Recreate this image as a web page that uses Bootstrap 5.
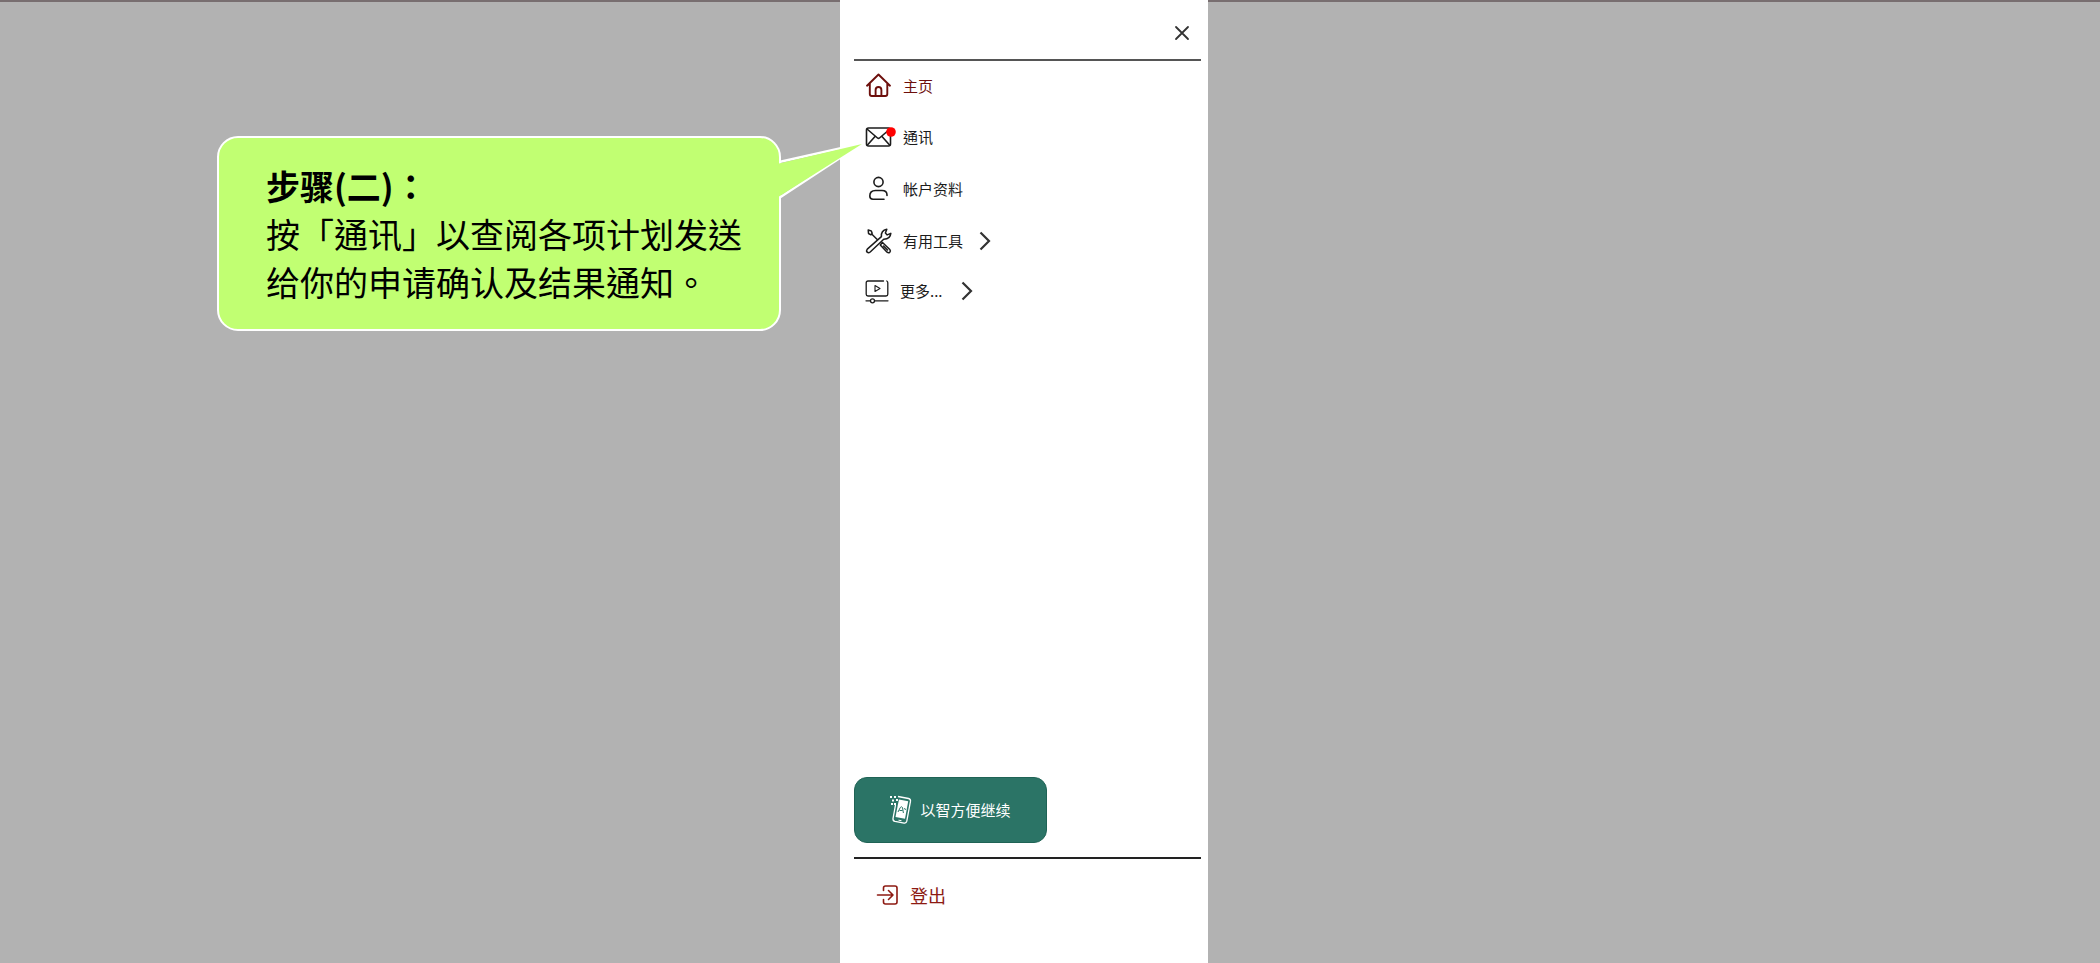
<!DOCTYPE html>
<html lang="zh-Hant">
<head>
<meta charset="utf-8">
<meta name="viewport" content="width=device-width, initial-scale=1">
<title>主页</title>
<link href="https://cdn.jsdelivr.net/npm/bootstrap@5.3.0/dist/css/bootstrap.min.css" rel="stylesheet">
<style>
  body { background: #b2b2b2; color: #1c1c1c; font-family: "Noto Sans CJK TC", sans-serif; font-size: 15px; }
  .shade { border-top: 2px solid #786e70; }
  .guide-col { width: 40%; padding: 134px 59px 0 0; }
  .callout { border: 2px solid #fff; border-radius: 21px; background: #c1ff72; color: #000; font-size: 34px; line-height: 48px; padding: 24px 37px 23px 47px; z-index: 2; }
  .callout-tail { position: absolute; left: 100%; top: 3px; }
  .drawer { width: 368px; padding: 0 7px 0 14px; background: #fff; }
  .drawer-top { height: 59px; padding: 7px 10px 0; }
  .rule { height: 0; border-top: 2px solid #555; }
  .rule-dark { border-color: #222; }
  .menu-link { height: 52px; padding-left: 11px; color: inherit; }
  .menu-link svg:first-child { width: 28px; margin-right: 10px; overflow: visible; }
  .menu-link .chevron { margin-left: 16px; }
  .more-link { height: 48px; }
  .more-link svg:first-child { margin-right: 7px; }
  .more-link .chevron { margin-left: 18px; }
  .home-link { height: 50px; color: #6d0f0c; }
  .smart-btn { width: 193px; height: 66px; margin-bottom: 14px; border: 1px solid #1f6355; border-radius: 13px; background: #2b7466; color: #fff; font-size: 15px; }
  .logout-row { height: 104px; padding: 22px; }
  .logout-link { color: #8d1a12; font-size: 18px; line-height: 28px; gap: 11px; }
</style>
</head>
<body>
<div class="d-flex min-vh-100">
  <section class="shade guide-col d-flex justify-content-end align-items-start flex-shrink-0">
    <div class="callout position-relative">
      <strong class="d-block">步骤(二)：</strong>
      <p class="m-0 text-nowrap">按「通讯」以查阅各项计划发送<br>给你的申请确认及结果通知。</p>
      <svg class="callout-tail" width="86" height="60" viewBox="0 0 86 60" aria-hidden="true">
        <path d="M0 21L83 2.500L0 57" fill="none" stroke="#fff" stroke-width="2.500"/>
        <path d="M0 22.500L83 3L0 55.500Z" fill="#c1ff72"/>
      </svg>
    </div>
  </section>

  <nav class="drawer d-flex flex-column flex-shrink-0" aria-label="主选单">
    <div class="drawer-top d-flex align-items-center justify-content-end">
      <button type="button" class="btn border-0 p-0 d-flex" aria-label="关闭">
        <svg width="18" height="18" viewBox="0 0 18 18" fill="none" stroke="#333" stroke-width="1.8" stroke-linecap="round"><path d="M3 3l12 12M15 3L3 15"/></svg>
      </button>
    </div>
    <div class="rule"></div>

    <a href="#" class="menu-link home-link d-flex align-items-center text-decoration-none">
      <svg height="28" viewBox="0 0 28 28" fill="none" stroke="currentColor" stroke-width="1.9" stroke-linecap="round" stroke-linejoin="round"><path d="M2 13.700L13.500 2.500L25 13.700M4.800 11.500v10.500q0 2 2 2h13.500q2 0 2-2V11.500M10.600 24v-6q0-3 2.900-3t2.900 3v6"/></svg>
      <span>主页</span>
    </a>
    <a href="#" class="menu-link d-flex align-items-center text-decoration-none">
      <svg height="28" viewBox="0 0 28 28" fill="none" stroke="currentColor" stroke-width="1.600" stroke-linejoin="round"><rect x="1.500" y="5" width="24" height="18" rx="2"/><path d="M2 6l10.500 9q1 .8 2 0L25 6M2 22.500l8-9M25 22.500l-8-9"/><circle cx="26" cy="9" r="4.800" fill="red" stroke="none"/></svg>
      <span>通讯</span>
    </a>
    <a href="#" class="menu-link d-flex align-items-center text-decoration-none">
      <svg height="28" viewBox="0 0 28 28" fill="none" stroke="currentColor" stroke-width="1.600" stroke-linecap="round"><circle cx="13.500" cy="7" r="4.600"/><path d="M22 20.500v-.5q0-4.500-5-4.500h-6.500Q4.800 15.500 4.800 21q0 3.200 3.200 3.200h11"/></svg>
      <span>帐户资料</span>
    </a>
    <a href="#" class="menu-link d-flex align-items-center text-decoration-none">
      <svg height="28" viewBox="0 0 28 28" fill="none" stroke="currentColor" stroke-width="1.500" stroke-linejoin="round" stroke-linecap="round"><path d="M16.400 9.600Q15.800 3.500 21.800 2.200L20.400 6l1.800 1.900 3.600-1.500Q25.300 12.300 18.700 12.200L5.200 25q-1.700 1.300-3 .1t.1-3zM3.200 3l3 .9 1 2.400L5.900 7.800 3.500 6.500zM7.200 7.500l5 5M17.500 15.500l7.300 7q1.200 1.500 0 2.700t-2.700 0l-6.800-7.300zM18.500 19l4 4"/></svg>
      <span>有用工具</span>
      <svg class="chevron" width="12" height="20" viewBox="0 0 12 20" fill="none" stroke="#333" stroke-width="2.200"><path d="M1.500 1.500L10 10L1.500 18.500"/></svg>
    </a>
    <a href="#" class="menu-link more-link d-flex align-items-center text-decoration-none">
      <svg height="28" viewBox="0 0 28 28" fill="none" stroke="currentColor" stroke-width="1.300" stroke-linecap="round" stroke-linejoin="round"><path d="M18.500 4H3q-1.800 0-1.800 1.800v11.400q0 1.800 1.800 1.800h18q1.800 0 1.800-1.800V5.800q0-1.400-1-1.800"/><path d="M10 8.500v6l5-3z" stroke-width="1.100"/><path d="M1 23.800h4M10 23.800h13"/><circle cx="7.500" cy="23.800" r="2"/></svg>
      <span>更多...</span>
      <svg class="chevron" width="12" height="20" viewBox="0 0 12 20" fill="none" stroke="#333" stroke-width="2.200"><path d="M1.500 1.500L10 10L1.500 18.500"/></svg>
    </a>

    <div class="mt-auto">
      <button type="button" class="smart-btn d-flex align-items-center justify-content-center gap-2 p-0">
        <svg width="22" height="30" viewBox="0 0 22 30" aria-hidden="true"><path d="M8 1.500l10.500 2q2.300.5 2 2.700l-3.700 20q-.5 2.300-2.700 1.900L5 26.400q-2.200-.5-2-2.700L5.500 10" fill="none" stroke="#fff" stroke-width="1.300"/><path d="M9 4.500l9.200 1.700-3.200 17.600L5.500 22.100 7.800 10z" fill="#fff"/><path d="M0 1h2v2H0zM4 1h2v2H4zM2 4.500h2v2H2zM6 4h2v2H6zM1 8h2v2H1zM4 8h2v2H4z" fill="#fff"/><path d="M8 17l2.300-4.500q1.200-1.500 2.200 0l.9 5.500M9.500 15.500h3M14.500 13l1 2" fill="none" stroke="#2b7466" stroke-width="1"/><path d="M8.500 25.200l3 .5" stroke="#fff" stroke-width="1"/></svg>
        <span>以智方便继续</span>
      </button>
      <div class="rule rule-dark"></div>
      <div class="logout-row">
        <a href="#" class="logout-link d-inline-flex align-items-center text-decoration-none">
          <svg width="23" height="22" viewBox="0 0 23 22" fill="none" stroke="currentColor" stroke-width="1.600" stroke-linecap="round" stroke-linejoin="round"><path d="M7.500 6.500V4q0-2 2-2H19q2 0 2 2v14q0 2-2 2H9.500q-2 0-2-2v-2.500M1.500 11H17M12.500 6.500L17 11l-4.500 4.500"/></svg>
          <span>登出</span>
        </a>
      </div>
    </div>
  </nav>
  <div class="shade flex-grow-1"></div>
</div>
<script src="https://cdn.jsdelivr.net/npm/bootstrap@5.3.0/dist/js/bootstrap.bundle.min.js"></script>
</body>
</html>
